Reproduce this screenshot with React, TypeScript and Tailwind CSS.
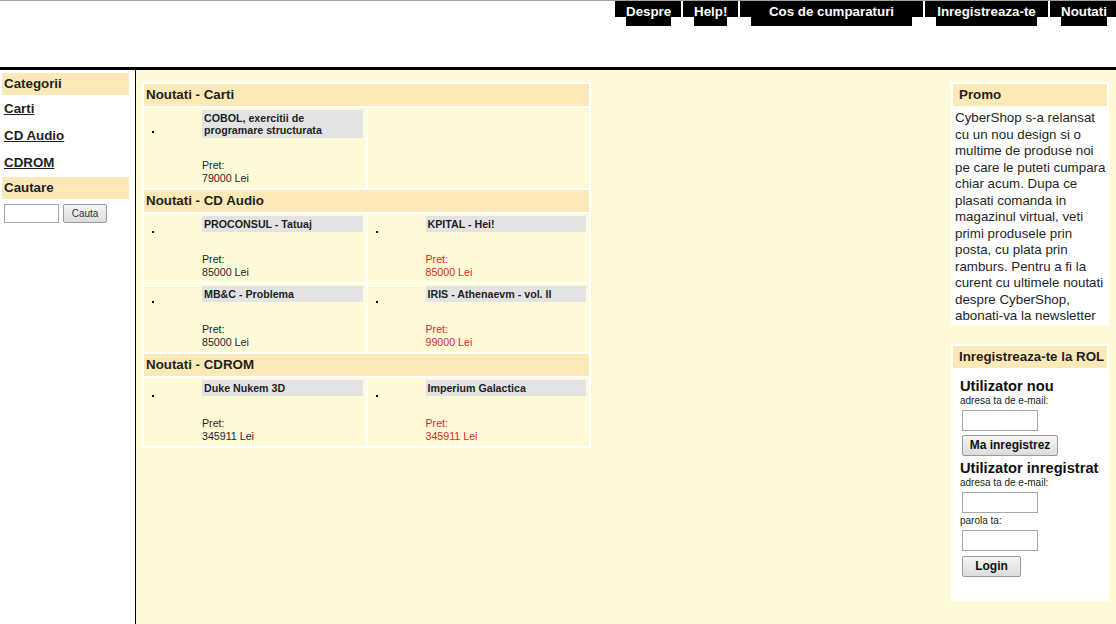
import React from "react";

const tabs = [
  { label: "Despre", w: "w-[66px]" },
  { label: "Help!", w: "w-[55px]" },
  { label: "Cos de cumparaturi", w: "w-[183px]" },
  { label: "Inregistreaza-te", w: "w-[123px]" },
  { label: "Noutati", w: "w-[66px]" },
];

type Item = { title: string; price: string };

const sections: { name: string; rows: (Item | null)[][] }[] = [
  {
    name: "Noutati - Carti",
    rows: [[{ title: "COBOL, exercitii de programare structurata", price: "79000 Lei" }, null]],
  },
  {
    name: "Noutati - CD Audio",
    rows: [
      [
        { title: "PROCONSUL - Tatuaj", price: "85000 Lei" },
        { title: "KPITAL - Hei!", price: "85000 Lei" },
      ],
      [
        { title: "MB&C - Problema", price: "85000 Lei" },
        { title: "IRIS - Athenaevm - vol. II", price: "99000 Lei" },
      ],
    ],
  },
  {
    name: "Noutati - CDROM",
    rows: [
      [
        { title: "Duke Nukem 3D", price: "345911 Lei" },
        { title: "Imperium Galactica", price: "345911 Lei" },
      ],
    ],
  },
];

function ProductCell({ item, red }: { item: Item | null; red: boolean }) {
  if (!item) return <div className="bg-[#fef9d7]" />;
  return (
    <div className="bg-[#fef9d7] flex">
      <div className="w-[58px] shrink-0 flex items-center pl-[8px]">
        <div className="w-[2px] h-[2px] bg-black mb-[32px]" />
      </div>
      <div className="flex-1 flex flex-col pt-[2px] pb-[3px] pr-[3px]">
        <div className="bg-[#e3e3e3] px-[2px] py-[2px] text-[10.67px] leading-[12px] font-bold text-[#1f1f1f]">
          {item.title}
        </div>
        <div className={`mt-[21px] text-[10.67px] leading-[13px] ${red ? "text-[#dc2a1f]" : "text-[#1f1f1f]"}`}>
          <div>Pret:</div>
          <div>{item.price}</div>
        </div>
      </div>
    </div>
  );
}

function SideHeader({ children }: { children: React.ReactNode }) {
  return (
    <div className="w-[127px] h-[22px] bg-[#fce9b8] flex items-center pl-[2px] text-[13.33px] font-bold text-[#1f1f1f]">
      {children}
    </div>
  );
}

function Field() {
  return <input className="ml-[2px] w-[76px] h-[21px] bg-white border border-[#a6a6a6] block" />;
}

export default function App() {
  return (
    <div className="h-screen w-full flex flex-col overflow-hidden bg-white text-[#1f1f1f] font-['Liberation_Sans',Arial,sans-serif]">
      {/* top menu */}
      <header className="h-[67px] border-t border-[#a3a3a3] flex justify-end gap-[2px] shrink-0">
        {tabs.map((t) => (
          <div
            key={t.label}
            className={`${t.w} h-[25px] flex bg-[linear-gradient(to_bottom,#000_16px,transparent_16px)]`}
          >
            <div className="flex-1 mx-[11px] bg-black text-white font-bold text-[13.33px] leading-[15px] pt-[3px] text-center whitespace-nowrap">
              {t.label}
            </div>
          </div>
        ))}
      </header>
      <div className="h-[3px] bg-black shrink-0" />

      <div className="flex-1 flex min-h-0">
        {/* left column */}
        <aside className="w-[136px] shrink-0 border-r border-black bg-white pt-[3px] pl-[2px]">
          <SideHeader>Categorii</SideHeader>
          {["Carti", "CD Audio", "CDROM"].map((c) => (
            <div key={c} className="h-[27px] flex items-center pl-[2px]">
              <a href="#" className="text-[13.33px] font-bold underline text-[#1f1f1f]">
                {c}
              </a>
            </div>
          ))}
          <div className="mt-[1px]">
            <SideHeader>Cautare</SideHeader>
          </div>
          <div className="flex items-center gap-[4px] mt-[5px] pl-[2px]">
            <input className="w-[55px] h-[19px] bg-white border border-[#a6a6a6]" />
            <button className="w-[44px] h-[19px] border border-[#9a9a9a] rounded-[2px] bg-[linear-gradient(#f6f6f6,#dcdcdc)] text-[10px] text-[#333]">
              Cauta
            </button>
          </div>
        </aside>

        {/* main */}
        <main className="flex-1 bg-[#fef9d7] flex justify-between pt-[12px] pl-[6px] pr-[7px]">
          <div className="w-[449px] self-start bg-white p-[2px] flex flex-col gap-[2px]">
            {sections.map((s) => (
              <React.Fragment key={s.name}>
                <div className="h-[22px] bg-[#fce9b8] flex items-center pl-[2px] text-[13.33px] font-bold text-[#1f1f1f]">
                  {s.name}
                </div>
                {s.rows.map((r, i) => (
                  <div key={i} className="grid grid-cols-2 gap-[2px]">
                    <ProductCell item={r[0]} red={false} />
                    <ProductCell item={r[1]} red={true} />
                  </div>
                ))}
              </React.Fragment>
            ))}
          </div>

          <div className="w-[158px] flex flex-col gap-[19px]">
            <div className="bg-white p-[2px] pb-0">
              <div className="h-[22px] bg-[#fce9b8] flex items-center pl-[6px] text-[13.33px] font-bold text-[#1f1f1f]">
                Promo
              </div>
              <p className="pl-[2px] pr-0 pt-[4px] text-[13.33px] leading-[16.5px] text-[#1f1f1f]">
                CyberShop s-a relansat cu un nou design si o multime de produse noi pe care le puteti cumpara
                chiar acum. Dupa ce plasati comanda in magazinul virtual, veti primi produsele prin posta, cu
                plata prin ramburs. Pentru a fi la curent cu ultimele noutati despre CyberShop, abonati-va la
                newsletter
              </p>
            </div>

            <div className="bg-white p-[2px] pb-[24px]">
              <div className="h-[22px] bg-[#fce9b8] flex items-center pl-[6px] text-[13.33px] font-bold text-[#1f1f1f] whitespace-nowrap">
                Inregistreaza-te la ROL
              </div>
              <div className="pl-[7px] pt-[10px]">
                <div className="text-[14.67px] leading-[17px] font-bold text-[#111]">Utilizator nou</div>
                <div className="text-[10px] leading-[12px] text-[#222]">adresa ta de e-mail:</div>
                <div className="mt-[3px]">
                  <Field />
                </div>
                <button className="ml-[2px] mt-[4px] w-[96px] h-[21px] border border-[#9a9a9a] rounded-[2px] bg-[linear-gradient(#f6f6f6,#dcdcdc)] text-[12px] font-bold text-[#111] block">
                  Ma inregistrez
                </button>
                <div className="mt-[4px] text-[14.67px] leading-[17px] font-bold text-[#111]">
                  Utilizator inregistrat
                </div>
                <div className="text-[10px] leading-[12px] text-[#222]">adresa ta de e-mail:</div>
                <div className="mt-[3px]">
                  <Field />
                </div>
                <div className="mt-[2px] text-[10px] leading-[12px] text-[#222]">parola ta:</div>
                <div className="mt-[3px]">
                  <Field />
                </div>
                <button className="ml-[2px] mt-[5px] w-[59px] h-[21px] border border-[#9a9a9a] rounded-[2px] bg-[linear-gradient(#f6f6f6,#dcdcdc)] text-[12px] font-bold text-[#111] block">
                  Login
                </button>
              </div>
            </div>
          </div>
        </main>
      </div>
    </div>
  );
}
